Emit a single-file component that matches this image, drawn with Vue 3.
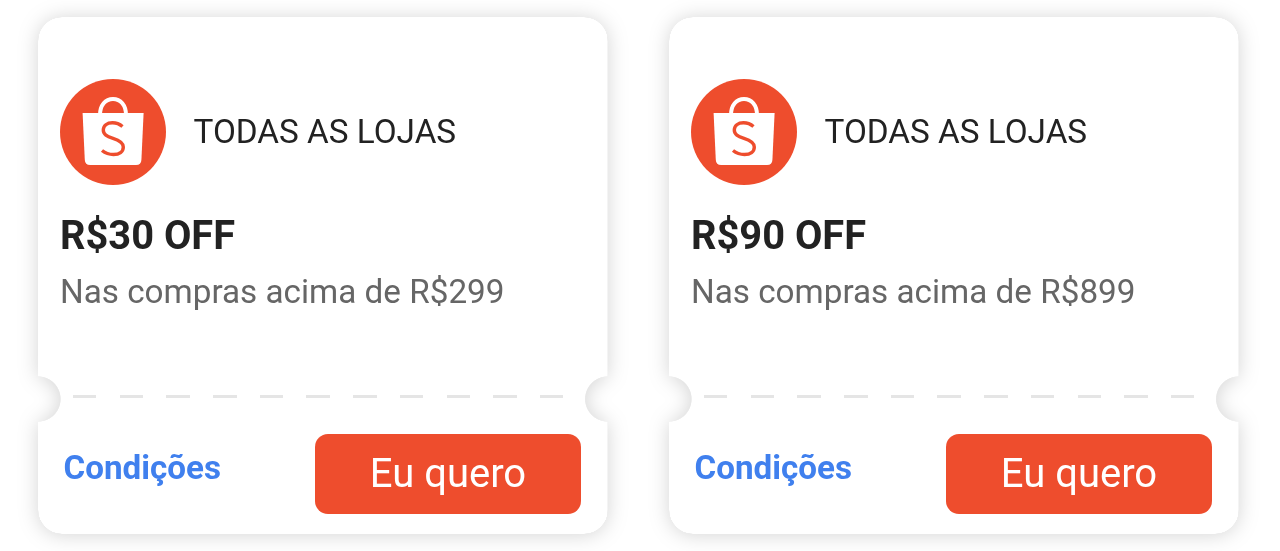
<template>
  <main class="coupon-list">
    <article v-for="coupon in coupons" :key="coupon.id" class="coupon-shadow">
      <div class="coupon">
        <header class="store">
          <svg class="store-logo" viewBox="0 0 106 106" aria-hidden="true">
            <circle cx="53" cy="53" r="53" fill="#ee4d2d" />
            <path d="M40 36c0-10 5.5-16 13-16s13 6 13 16" fill="none" stroke="#fff" stroke-width="4" />
            <path d="M22.6 34h61l-2.2 47q-.3 5-5.3 5h-46q-5 0-5.3-5z" fill="#fff" />
            <path
              d="M62.5 47.5C59 44.500 55.500 43.700 52.500 43.700c-5.500 0-9.200 3-9.200 7.300 0 4.500 3.500 6.300 9.700 8.300 6.500 2 10.300 4.200 10.300 8.700 0 4.800-4 7.500-9.800 7.500-4.500 0-8-1.200-11.500-4"
              fill="none"
              stroke="#ee4d2d"
              stroke-width="3.4"
            />
          </svg>
          <span class="store-name">TODAS AS LOJAS</span>
        </header>
        <h2 class="discount">{{ coupon.discount }}</h2>
        <p class="minimum">Nas compras acima de {{ coupon.minimum }}</p>
        <div class="divider"></div>
        <footer class="actions">
          <a class="terms">Condições</a>
          <button class="button-claim" type="button">Eu quero</button>
        </footer>
      </div>
    </article>
  </main>
</template>

<script setup>
const coupons = [
  { id: 1, discount: 'R$30 OFF', minimum: 'R$299' },
  { id: 2, discount: 'R$90 OFF', minimum: 'R$899' },
];
</script>

<style>
body {
  margin: 0;
  background: #fff;
}
</style>

<style scoped>
.coupon-list {
  box-sizing: border-box;
  display: flex;
  gap: 61px;
  height: 551px;
  padding: 17px 0 0 38px;
  overflow: hidden;
  font-family: Roboto, 'Liberation Sans', sans-serif;
}

.coupon-shadow {
  flex: none;
  filter: drop-shadow(0 0 0.5px rgba(0, 0, 0, 0.1)) drop-shadow(0 1px 10px rgba(0, 0, 0, 0.17));
}

.coupon {
  box-sizing: border-box;
  display: flex;
  flex-direction: column;
  width: 570px;
  height: 517px;
  padding: 62px 27px 20px 22px;
  border-radius: 24px;
  background: #fff;
  /* round notches on both sides of the divider */
  mask:
    radial-gradient(circle at 0 382px, transparent 22px, #000 23px) left / 51% 100% no-repeat,
    radial-gradient(circle at 100% 382px, transparent 22px, #000 23px) right / 51% 100% no-repeat;
}

.store {
  display: flex;
  align-items: center;
  gap: 27.5px;
}

.store-logo {
  width: 106px;
  height: 106px;
}

.store-name {
  color: #222;
  font-size: 33.3px;
  line-height: 40px;
}

.discount {
  margin: 27px 0 0;
  color: #222;
  font-size: 39.8px;
  font-weight: 700;
  line-height: 48px;
}

.minimum {
  margin: 12px 0 0;
  color: #666;
  font-size: 33.25px;
  line-height: 40px;
}

.divider {
  width: 490px;
  height: 3px;
  margin: 83px 0 0 13px;
  background: repeating-linear-gradient(90deg, #e5e5e5 0 23.5px, transparent 23.5px 46.7px);
}

.actions {
  display: flex;
  justify-content: space-between;
  margin-top: 36px;
  padding-left: 3.5px;
}

.terms {
  padding-top: 14px;
  color: #4080ee;
  font-size: 33.2px;
  font-weight: 700;
  line-height: 40px;
}

.button-claim {
  width: 266px;
  height: 80px;
  padding: 0;
  border: 0;
  border-radius: 13px;
  background: #ee4d2d;
  color: #fff;
  font-family: inherit;
  font-size: 40px;
  line-height: 80px;
  cursor: pointer;
}
</style>
